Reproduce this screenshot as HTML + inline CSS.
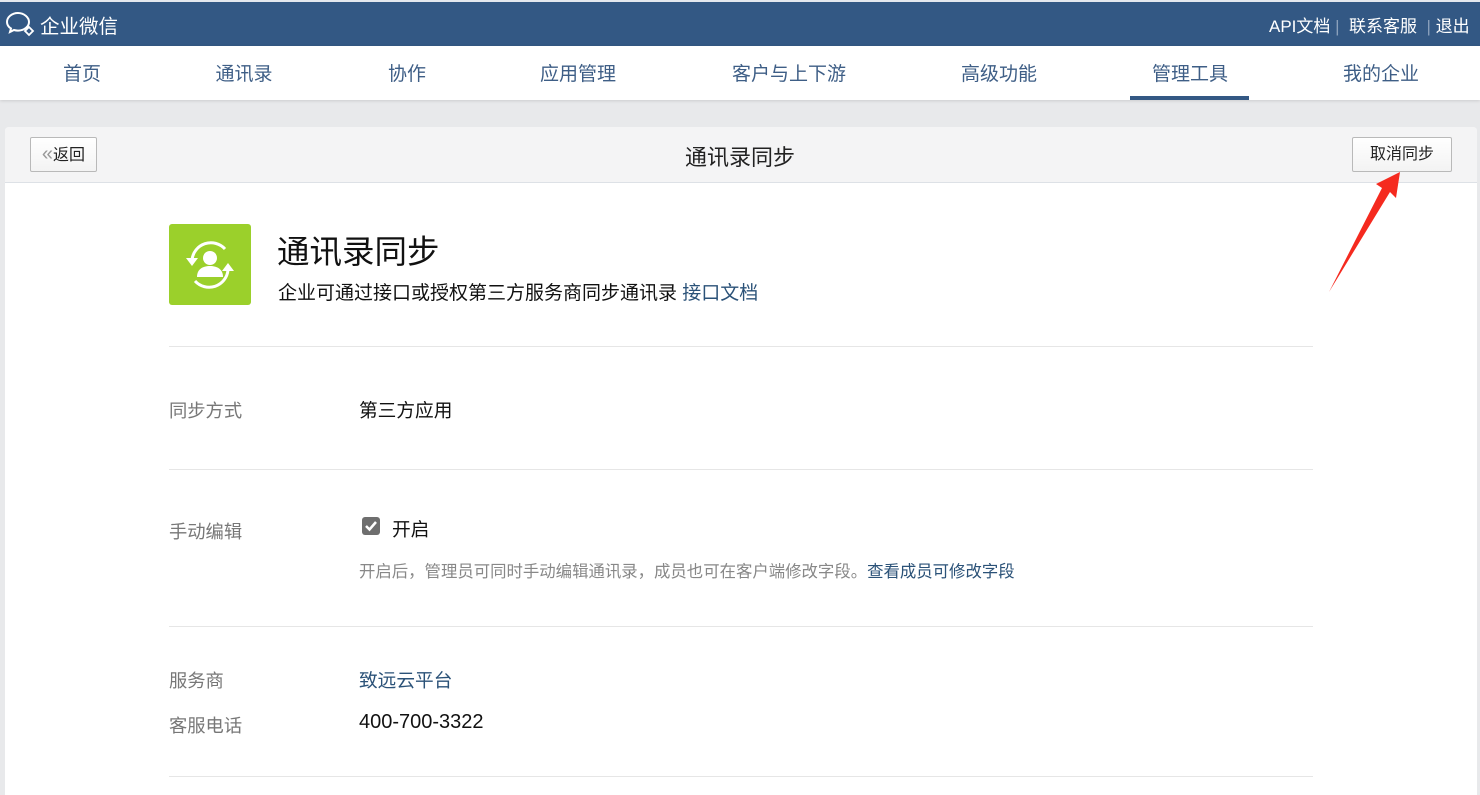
<!DOCTYPE html>
<html><head><meta charset="utf-8"><style>
*{margin:0;padding:0;box-sizing:border-box}
html,body{width:1480px;height:795px;overflow:hidden}
body{background:#e8e9eb;font-family:"Liberation Sans","Noto Sans CJK SC",sans-serif;position:relative}
.a{position:absolute;white-space:nowrap}
.top{left:0;top:2px;width:1480px;height:44px;background:#335884}
.nav{left:0;top:46px;width:1480px;height:54px;background:#fff;box-shadow:0 1px 3px rgba(0,0,0,.12)}
.ni{top:59px;font-size:19px;color:#3e5e86;transform:translateX(-50%)}
.card{left:5px;top:127px;width:1472px;height:668px;background:#fff;border-radius:4px 4px 0 0}
.hd{left:5px;top:127px;width:1472px;height:56px;background:#f4f4f5;border-bottom:1px solid #dde1e6;border-radius:4px 4px 0 0}
.btn{border:1px solid #b9b9b9;border-radius:2px;background:linear-gradient(#fff,#f3f3f3);font-size:16px;color:#222;text-align:center}
.line{left:169px;width:1144px;height:1px;background:#e6e6e6}
.lb{left:169px;font-size:18.3px;color:#777}
.v{left:359px;font-size:18.7px;color:#111}
.lk{color:#2b5278}
</style></head><body>
<div class="a" style="left:0;top:0;width:1480px;height:2px;background:#e4e8ee"></div>
<div class="a top"></div>
<svg class="a" style="left:5px;top:10px" width="32" height="28" viewBox="0 0 32 28"><path d="M13 3C7 3 2 7 2 12c0 3 1.5 5 4 6.5L5 22l4-2c1.3.4 2.6.6 4 .6 6 0 11-4 11-8.6S19 3 13 3z" fill="none" stroke="#fff" stroke-width="2"/><path d="M24 17l4 4-4 4-4-4z" fill="none" stroke="#fff" stroke-width="1.8"/></svg>
<div class="a" style="left:40px;top:10px;font-size:19.5px;color:#fff">企业微信</div>
<div class="a" style="left:1269px;top:12px;font-size:17px;color:#fff">API文档 <span style="color:#8aa0bb">|</span> &nbsp;联系客服 &nbsp;<span style="color:#8aa0bb">|</span> 退出</div>
<div class="a nav"></div>
<div class="a ni" style="left:82px">首页</div>
<div class="a ni" style="left:244px">通讯录</div>
<div class="a ni" style="left:407px">协作</div>
<div class="a ni" style="left:578px">应用管理</div>
<div class="a ni" style="left:789px">客户与上下游</div>
<div class="a ni" style="left:999px">高级功能</div>
<div class="a ni" style="left:1190px">管理工具</div>
<div class="a ni" style="left:1381px">我的企业</div>
<div class="a" style="left:1130px;top:96px;width:119px;height:4px;background:#335884"></div>
<div class="a card"></div>
<div class="a hd"></div>
<div class="a btn" style="left:30px;top:137px;width:67px;height:35px;line-height:33px"><span style="color:#999;font-size:20px">«</span>返回</div>
<div class="a" style="left:0;width:1480px;top:140px;text-align:center;font-size:22px;color:#222">通讯录同步</div>
<div class="a btn" style="left:1352px;top:137px;width:100px;height:35px;line-height:33px">取消同步</div>
<svg class="a" style="left:1320px;top:170px" width="80" height="125"><path d="M9 122L62 18 56 14 80 2 76 28 70 22z" fill="#f52a1f"/></svg>
<div class="a" style="left:169px;top:224px;width:82px;height:81px;background:#9bd02b;border-radius:3px"></div>
<svg class="a" style="left:169px;top:224px" width="82" height="81" viewBox="0 0 82 81"><path d="M23 36a19 19 0 0 1 33-11M59 46a19 19 0 0 1-33 11" fill="none" stroke="#fff" stroke-width="3"/><path d="M17 34l6 8 6-8zM53 47l6-8 6 8z" fill="#fff"/><circle cx="41" cy="34" r="7" fill="#fff"/><path d="M28 53c0-8 6-11 13-11s13 3 13 11z" fill="#fff"/></svg>
<div class="a" style="left:277px;top:226px;font-size:32.5px;color:#111">通讯录同步</div>
<div class="a" style="left:278px;top:278px;font-size:19px;color:#111">企业可通过接口或授权第三方服务商同步通讯录 <span class="lk">接口文档</span></div>
<div class="a line" style="top:346px"></div>
<div class="a lb" style="top:397px">同步方式</div>
<div class="a v" style="top:396px">第三方应用</div>
<div class="a line" style="top:469px"></div>
<div class="a lb" style="top:518px">手动编辑</div>
<div class="a" style="left:362px;top:517px;width:18px;height:18px;background:#6e6e6e;border-radius:3px"></div>
<svg class="a" style="left:362px;top:517px" width="18" height="18"><path d="M4 9l3.5 3.5L14 5" fill="none" stroke="#fff" stroke-width="2.5"/></svg>
<div class="a v" style="left:392px;top:515px">开启</div>
<div class="a" style="left:359px;top:558px;font-size:16.4px;color:#888">开启后，管理员可同时手动编辑通讯录，成员也可在客户端修改字段。<span class="lk">查看成员可修改字段</span></div>
<div class="a line" style="top:626px"></div>
<div class="a lb" style="top:667px">服务商</div>
<div class="a v lk" style="top:666px;color:#2b5278">致远云平台</div>
<div class="a lb" style="top:712px">客服电话</div>
<div class="a v" style="top:711px;font-size:20px">400-700-3322</div>
<div class="a line" style="top:776px"></div>
</body></html>
